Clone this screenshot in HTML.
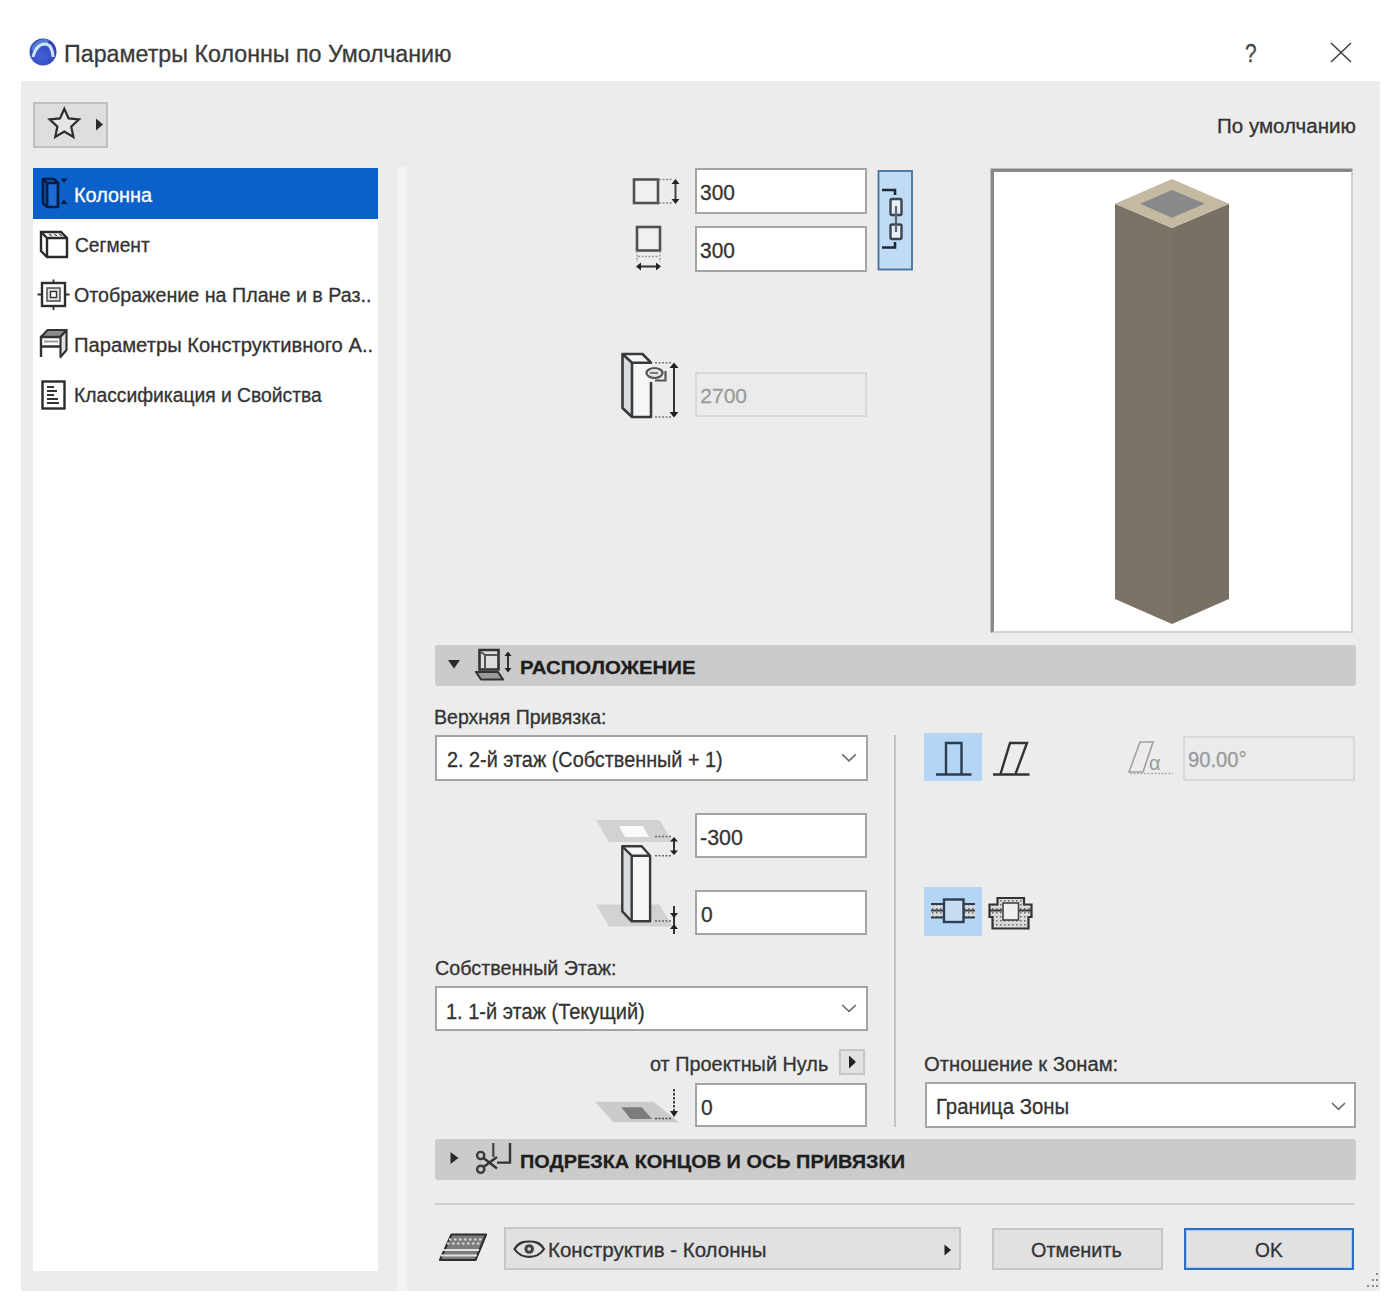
<!DOCTYPE html>
<html><head><meta charset="utf-8">
<style>
html,body{margin:0;padding:0;}
body{width:1396px;height:1308px;background:#fff;position:relative;overflow:hidden;font-family:"Liberation Sans",sans-serif;color:#333;}
.a{position:absolute;}
.t{position:absolute;white-space:nowrap;line-height:1;transform-origin:0 0;-webkit-text-stroke:0.3px currentColor;}
.body{left:21px;top:81px;width:1359px;height:1210px;background:#ececec;}
.inp{position:absolute;background:#fff;border:2px solid #a4a4a4;box-sizing:border-box;}
.dis{position:absolute;background:#ebebeb;border:2px solid #d8d8d8;box-sizing:border-box;}
.sect{position:absolute;left:435px;width:921px;height:41px;background:#cbcbcb;border-radius:3px;}
.btn{position:absolute;background:#e1e1e1;border:2px solid #c6c6c6;box-sizing:border-box;}
.tog{position:absolute;background:#b5d5f5;}
</style></head>
<body>
<!-- title -->
<svg class="a" style="left:27px;top:36px" width="32" height="32" viewBox="0 0 32 32">
  <defs><radialGradient id="lg" cx="0.45" cy="0.65" r="0.7"><stop offset="0" stop-color="#4560d8"/><stop offset="0.8" stop-color="#2f47b8"/><stop offset="1" stop-color="#1c2f88"/></radialGradient></defs>
  <circle cx="16" cy="16" r="13.5" fill="url(#lg)"/>
  <path d="M4.5 13 A13 13 0 0 1 22 4 L20 10 A9 9 0 0 0 8 18 Z" fill="#5a8ad8" opacity="0.8"/>
  <path d="M6 21 C8 13 12.5 8 18 8 C23 8 25.5 13 26 21" stroke="#cfe2fb" stroke-width="3" fill="none"/>
</svg>
<svg class="a" style="left:1330px;top:42px" width="22" height="21"><path d="M1 1 L21 20 M21 1 L1 20" stroke="#444" stroke-width="1.6"/></svg>

<div class="a body"></div>

<!-- star button -->
<div class="btn" style="left:33px;top:102px;width:75px;height:46px;background:#dedede;border-color:#bfbfbf"></div>
<svg class="a" style="left:0;top:0" width="120" height="160">
  <polygon points="64.3,108.8 68.6,118.4 79.0,119.4 71.2,126.6 73.4,137.0 64.3,131.6 55.2,137.0 57.4,126.6 49.6,119.4 60.0,118.4" fill="#e6e6e6" stroke="#2e2e2e" stroke-width="2.2" stroke-linejoin="miter"/>
  <polygon points="96,118.5 103,124.5 96,130.5" fill="#2a2a2a"/>
</svg>


<!-- left list -->
<div class="a" style="left:33px;top:168px;width:345px;height:1103px;background:#fff"></div>
<div class="a" style="left:33px;top:168px;width:345px;height:51px;background:#0b60c9"></div>
<svg class="a" style="left:0;top:160px" width="80" height="260" viewBox="0 160 80 260">
  <!-- kolonna icon on blue -->
  <path d="M49 184 L56 184 L56 206 L49 206 Z" fill="#1d6bd0"/>
  <g stroke="#0c1c40" fill="none" stroke-width="2.6" stroke-linejoin="round">
    <path d="M43 179 L54 179 L58 183 L58 207 L47 207 L43 203 Z"/>
    <path d="M43 179 L47 183 L58 183 M47 183 L47 207"/>
  </g>
  <path d="M60.5 178.5 L67.5 178.5 L64 183 Z M60.5 204 L67.5 204 L64 199.5 Z" fill="#0c1c40"/>
  <!-- segment cube -->
  <g stroke="#2a2a2a" fill="none" stroke-width="2.4">
    <path d="M41 232 L61 232 L67 238 L67 257 L47 257 L41 251 Z"/>
    <path d="M41 232 L47 238 L67 238 M47 238 L47 257"/>
  </g>
  <path d="M49 234 L52 236 M54 234 L57 236 M59 234 L62 236" stroke="#555" stroke-width="1.5"/>
  <!-- display plan icon -->
  <rect x="42" y="283" width="23" height="23" fill="#fff" stroke="#2e2e2e" stroke-width="2.4"/>
  <path d="M37.5 294.5 L42 294.5 M65 294.5 L69.5 294.5 M53.5 279.5 L53.5 283 M53.5 306 L53.5 310" stroke="#2e2e2e" stroke-width="1.8"/>
  <rect x="47" y="288" width="13" height="13" fill="#e0e0e0" stroke="#555" stroke-width="1.6"/>
  <rect x="50.5" y="291.5" width="6" height="6" fill="#fff" stroke="#333" stroke-width="1.4"/>
  <!-- struct analysis icon -->
  <path d="M41 337 L47.5 330 L66.5 330 L60.5 337 Z" fill="#8c8c8c" stroke="#333" stroke-width="2" stroke-linejoin="round"/>
  <path d="M60.5 337 L66.5 330 L66.5 350 L60.5 357 Z" fill="#dfe3e8" stroke="#333" stroke-width="2.2" stroke-linejoin="round"/>
  <g stroke="#333" fill="none" stroke-width="2.4">
    <path d="M41 357 L41 337 L60.5 337 M41 346.5 L60.5 346.5"/>
  </g>
  <path d="M44 341.5 L58 341.5" stroke="#999" stroke-width="2"/>
  <!-- classification doc -->
  <rect x="42.5" y="381.5" width="22" height="27" fill="#fff" stroke="#2a2a2a" stroke-width="2.4"/>
  <path d="M47 387 L54 387 M47 391 L57 391 M47 395 L54 395 M47 399 L58 399 M47 403 L59 403" stroke="#333" stroke-width="2"/>
</svg>

<!-- splitter -->
<div class="a" style="left:397px;top:167px;width:10px;height:1124px;background:#f3f3f3"></div>

<svg class="a" style="left:580px;top:160px" width="360" height="280" viewBox="580 160 360 280">
  <!-- width icon -->
  <rect x="634" y="179.5" width="24" height="23.5" fill="#f0f0f0" stroke="#505050" stroke-width="2.6"/>
  <path d="M659 179.5 L672 179.5 M659 203 L672 203" stroke="#888" stroke-width="1.4" stroke-dasharray="2 1.5"/>
  <path d="M675.5 183 L675.5 200" stroke="#444" stroke-width="2"/>
  <path d="M671.5 184 L675.5 179 L679.5 184 Z M671.5 199 L675.5 204 L679.5 199 Z" fill="#222"/>
  <!-- depth icon -->
  <rect x="637" y="227" width="23" height="23.5" fill="#f0f0f0" stroke="#505050" stroke-width="2.6"/>
  <path d="M637 251 L637 262 M660 251 L660 262 M638 256.5 L659 256.5" stroke="#999" stroke-width="1.4" stroke-dasharray="2 1.5"/>
  <path d="M640 266.5 L657 266.5" stroke="#333" stroke-width="2"/>
  <path d="M641 262.5 L636 266.5 L641 270.5 Z M656 262.5 L661 266.5 L656 270.5 Z" fill="#222"/>
  <!-- link button -->
  <rect x="878.5" y="171" width="33.5" height="98.5" fill="#c0dcf5" stroke="#44709f" stroke-width="1.8"/>
  <path d="M882 190 L895 190 L895 195" stroke="#1f2a38" stroke-width="2.6" fill="none"/>
  <path d="M882 247.5 L895 247.5 L895 242" stroke="#1f2a38" stroke-width="2.6" fill="none"/>
  <rect x="890.5" y="199" width="11" height="16" rx="1.5" fill="#e6eef6" stroke="#3a4552" stroke-width="2.4"/>
  <rect x="890.5" y="224.5" width="11" height="14.5" rx="1.5" fill="#e6eef6" stroke="#3a4552" stroke-width="2.4"/>
  <path d="M896 206 L896 232" stroke="#5a6672" stroke-width="2.2"/>
  <!-- height column icon -->
  <path d="M622.5 354 L642.5 354 L651 362.7 L651 417 L632 417 L622.5 408 Z" fill="#f6f6f6"/>
  <path d="M622.5 354 L632 362.7 L632 417 L622.5 408 Z" fill="#d9dde2"/>
  <g stroke="#3a3a3a" stroke-width="2.6" fill="none" stroke-linejoin="round">
    <path d="M651 382 L651 417 L632 417 L622.5 408 L622.5 354 L642.5 354 L651 362.7 L632 362.7 L622.5 354"/>
    <path d="M632 362.7 L632 417"/>
  </g>
  <path d="M655 362.7 L671 362.7 M655 417 L671 417" stroke="#777" stroke-width="1.4" stroke-dasharray="2 1.5"/>
  <path d="M674 367 L674 413" stroke="#333" stroke-width="2"/>
  <path d="M669.5 368 L674 362.5 L678.5 368 Z M669.5 412 L674 417.5 L678.5 412 Z" fill="#222"/>
  <ellipse cx="654.5" cy="373" rx="8" ry="5" fill="#e4e4e4" stroke="#555" stroke-width="2.2"/>
  <path d="M650 373 L658 373" stroke="#777" stroke-width="2"/>
  <path d="M655 380.5 L665.5 380.5 L665.5 371" stroke="#555" stroke-width="2.2" fill="none"/>
</svg>
<!-- size inputs -->
<div class="inp" style="left:695px;top:168px;width:172px;height:46px"></div>
<div class="inp" style="left:695px;top:226px;width:172px;height:46px"></div>

<div class="dis" style="left:695px;top:372px;width:172px;height:45px"></div>

<!-- preview -->
<div class="a" style="left:991px;top:169px;width:362px;height:464px;background:#fff;border-top:3px solid #888;border-left:3px solid #888;border-right:2px solid #d0d0d0;border-bottom:2px solid #d0d0d0;box-sizing:border-box;box-shadow:-1px -1px 0 #bdbdbd"></div>

<svg class="a" style="left:1100px;top:170px" width="150" height="460" viewBox="1100 170 150 460">
  <path d="M1115 203.8 L1172 228 L1172 624 L1115 599 Z" fill="#7b7266"/>
  <path d="M1229 203.8 L1172 228 L1172 624 L1229 599 Z" fill="#797064"/>
  <path d="M1172 179.1 L1229 203.8 L1172 228 L1115 203.8 Z" fill="#c5b9a1"/>
  <path d="M1172 189.9 L1204.8 203.8 L1172 217.8 L1140.3 203.8 Z" fill="#87898b"/>
</svg>
<!-- section 1 -->
<div class="sect" style="top:645px"></div>
<svg class="a" style="left:440px;top:640px" width="80" height="50" viewBox="440 640 80 50">
  <path d="M448 660 L460 660 L454 668.5 Z" fill="#2a2a2a"/>
  <path d="M479.5 650 L498.5 650 L498.5 669.5 L479.5 669.5 Z" fill="#dedede" stroke="#333" stroke-width="2.6"/>
  <path d="M481 652 L485 655 L485 669" stroke="#555" stroke-width="2" fill="none"/>
  <path d="M485 655 L498 655" stroke="#555" stroke-width="2"/>
  <path d="M476 672 L498 672 L503 679.5 L481 679.5 Z" fill="#9a9a9a" stroke="#333" stroke-width="2.2" stroke-linejoin="round"/>
  <path d="M508 655 L508 669" stroke="#333" stroke-width="2"/>
  <path d="M504.5 656 L508 651.5 L511.5 656 Z M504.5 668 L508 672.5 L511.5 668 Z" fill="#222"/>
</svg>

<div class="inp" style="left:435px;top:735px;width:433px;height:46px"></div>

<div class="inp" style="left:695px;top:813px;width:172px;height:45px"></div>
<div class="inp" style="left:695px;top:890px;width:172px;height:45px"></div>

<svg class="a" style="left:580px;top:800px" width="110" height="340" viewBox="580 800 110 340">
  <!-- top plane -->
  <path d="M596 820 L659.5 820 L672.5 842 L609 842 Z" fill="#d2d2d2"/>
  <path d="M619 826 L643 826 L649 837 L625 837 Z" fill="#fafafa"/>
  <!-- bottom plane -->
  <path d="M596 904.5 L659.5 904.5 L672.5 926.5 L609 926.5 Z" fill="#d2d2d2"/>
  <!-- column -->
  <path d="M622.3 846.3 L641.7 846.3 L650.1 855.7 L650.1 921.3 L631.7 921.3 L622.3 911.4 Z" fill="#f6f6f6"/>
  <path d="M622.3 846.3 L631.7 855.7 L631.7 921.3 L622.3 911.4 Z" fill="#d9dde2"/>
  <g stroke="#3a3a3a" stroke-width="2.4" fill="none" stroke-linejoin="round">
    <path d="M622.3 846.3 L641.7 846.3 L650.1 855.7 L650.1 921.3 L631.7 921.3 L622.3 911.4 Z"/>
    <path d="M622.3 846.3 L631.7 855.7 L650.1 855.7 M631.7 855.7 L631.7 921.3"/>
  </g>
  <path d="M655 836.5 L671 836.5 M655 855.7 L671 855.7 M655 921 L671 921" stroke="#666" stroke-width="1.4" stroke-dasharray="2 1.5"/>
  <path d="M674 840 L674 852" stroke="#333" stroke-width="2"/>
  <path d="M670 841.5 L674 837 L678 841.5 Z M670 850.5 L674 855 L678 850.5 Z" fill="#222"/>
  <path d="M674 906 L674 934" stroke="#333" stroke-width="2"/>
  <path d="M670 913 L674 918 L678 913 Z M670 929 L674 924 L678 929 Z" fill="#222"/>
  <!-- project zero plane -->
  <path d="M595 1101.8 L653.6 1101.8 L678.8 1122.3 L613.4 1122.3 Z" fill="#cbcbcb"/>
  <path d="M621.2 1107.3 L641.7 1107.3 L652 1119 L630.7 1119 Z" fill="#7c7c7c"/>
  <path d="M655 1118.5 L671 1118.5" stroke="#444" stroke-width="1.6" stroke-dasharray="2 1.5"/>
  <path d="M674 1089 L674 1112" stroke="#333" stroke-width="1.8" stroke-dasharray="2.5 1.5"/>
  <path d="M670 1111 L674 1117 L678 1111 Z" fill="#222"/>
</svg>
<div class="inp" style="left:435px;top:986px;width:433px;height:45px"></div>

<div class="btn" style="left:839px;top:1049px;width:26px;height:26px"></div>
<div class="inp" style="left:695px;top:1083px;width:172px;height:44px"></div>

<div class="a" style="left:894px;top:735px;width:2px;height:392px;background:#c4c4c4"></div>

<div class="tog" style="left:924px;top:733px;width:58px;height:48px"></div>
<div class="dis" style="left:1183px;top:736px;width:172px;height:45px"></div>
<div class="tog" style="left:924px;top:887px;width:58px;height:49px"></div>

<div class="inp" style="left:925px;top:1082px;width:431px;height:46px"></div>

<!-- section 2 -->
<div class="sect" style="top:1138.5px"></div>
<svg class="a" style="left:440px;top:1138px" width="80" height="45" viewBox="440 1138 80 45">
  <path d="M450.5 1152 L458.5 1158 L450.5 1164 Z" fill="#2a2a2a"/>
  <circle cx="480.7" cy="1155.5" r="3.6" fill="none" stroke="#3a3a3a" stroke-width="2.4"/>
  <circle cx="480.7" cy="1169.3" r="3.6" fill="none" stroke="#3a3a3a" stroke-width="2.4"/>
  <path d="M483.5 1158 L497 1168.5 M483.5 1167 L497 1157" stroke="#333" stroke-width="2.4"/>
  <path d="M493.3 1143 L493.3 1157" stroke="#444" stroke-width="2.2"/>
  <path d="M510 1143 L510 1162.6 L497 1162.6" stroke="#333" stroke-width="2.4" fill="none"/>
</svg>

<div class="a" style="left:435px;top:1203px;width:919px;height:2px;background:#cfcfcf"></div>

<!-- chevrons & misc icons -->
<svg class="a" style="left:0;top:0" width="1396" height="1308">
  <path d="M842.2 754.4 L849 760.8 L855.8 754.4" stroke="#6a6a6a" stroke-width="1.6" fill="none"/>
  <path d="M842.2 1005 L849 1011.4 L855.8 1005" stroke="#6a6a6a" stroke-width="1.6" fill="none"/>
  <path d="M1332 1103 L1338.5 1109.4 L1345 1103" stroke="#6a6a6a" stroke-width="1.6" fill="none"/>
  <!-- small arrow button -->
  <path d="M849 1055.5 L856 1062 L849 1068.5 Z" fill="#222"/>
</svg>
<!-- toggle icons -->
<svg class="a" style="left:900px;top:720px" width="300" height="230" viewBox="900 720 300 230">
  <defs>
    <pattern id="hatch" width="4" height="4" patternUnits="userSpaceOnUse"><rect width="4" height="4" fill="#dadada"/><rect width="1.5" height="1.5" fill="#6a6a6a"/></pattern>
  </defs>
  <!-- straight column -->
  <path d="M946 774 L946 743 L961.5 743 L961.5 774" stroke="#2c3b4e" stroke-width="2.4" fill="none"/>
  <path d="M936 774.5 L971.5 774.5" stroke="#2c3b4e" stroke-width="2.6"/>
  <!-- slanted column -->
  <path d="M1000.5 774 L1010 743 L1027 743 L1015.5 774" stroke="#333" stroke-width="2.4" fill="none" stroke-linejoin="miter"/>
  <path d="M993 774.5 L1029.5 774.5" stroke="#333" stroke-width="2.6"/>
  <!-- angle icon (disabled) -->
  <path d="M1129 772 L1140 742 L1153 742 L1143 772 Z" stroke="#a0a0a0" stroke-width="1.6" fill="none"/>
  <path d="M1130 773.5 L1173 773.5" stroke="#aaa" stroke-width="1.4" stroke-dasharray="2 1.5"/>
  <text x="1149" y="769.5" font-family="Liberation Sans" font-size="20" fill="#9a9a9a">α</text>
  <!-- wall relation icon 1 -->
  <rect x="931" y="903" width="44" height="15.5" fill="url(#hatch)"/>
  <path d="M931 904 L975 904 M931 910.5 L975 910.5 M931 917.5 L975 917.5" stroke="#2e3e52" stroke-width="2"/>
  <rect x="944" y="899.5" width="19.5" height="22.5" fill="#c7dcf2" stroke="#2e3e52" stroke-width="2.4"/>
  <!-- wall relation icon 2 -->
  <path d="M997.5 898 L1024 898 L1024 904.5 L1031.5 904.5 L1031.5 917 L1028.5 917 L1028.5 928.5 L992.5 928.5 L992.5 917 L989.5 917 L989.5 904.5 L997.5 904.5 Z" fill="url(#hatch)" stroke="#333" stroke-width="2.2"/>
  <path d="M989.5 910.5 L1002 910.5 M1019 910.5 L1031.5 910.5" stroke="#333" stroke-width="2"/>
  <rect x="1003" y="903" width="15.5" height="17" fill="#efefef" stroke="#444" stroke-width="1.6"/>
</svg>

<!-- footer -->
<div class="btn" style="left:504px;top:1227px;width:457px;height:43px"></div>
<svg class="a" style="left:940px;top:1240px" width="20" height="20"><path d="M4.5 4.5 L11 10 L4.5 15.5 Z" fill="#222"/></svg>
<div class="btn" style="left:992px;top:1228px;width:171px;height:42px"></div>
<div class="btn" style="left:1184px;top:1228px;width:170px;height:42px;border:2.5px solid #2f6fc0;box-shadow:inset 0 0 0 1px #a9cdf5"></div>

<svg class="a" style="left:1360px;top:1268px" width="20" height="22" viewBox="1360 1268 20 22">
  <g fill="#8a8a8a"><rect x="1376" y="1273" width="2" height="2"/><rect x="1372" y="1279" width="2" height="2"/><rect x="1376" y="1279" width="2" height="2"/><rect x="1367" y="1285" width="2" height="2"/><rect x="1372" y="1285" width="2" height="2"/><rect x="1376" y="1285" width="2" height="2"/></g>
</svg>
<!-- footer icons -->
<svg class="a" style="left:430px;top:1220px" width="130" height="60" viewBox="430 1220 130 60">
  <path d="M451.5 1234.5 L486 1234.5 L475.5 1260 L440 1260 Z" fill="#7c7c7c" stroke="#2e2e2e" stroke-width="2.2" stroke-linejoin="round"/>
  <path d="M442 1250 L479 1250 M441 1255.5 L477 1255.5" stroke="#e0e0e0" stroke-width="2.2"/>
  <path d="M449 1239.5 L482 1239.5 M447 1243.5 L480 1243.5" stroke="#dcdcdc" stroke-width="2" stroke-dasharray="2.5 2.5"/>
  <!-- eye -->
  <path d="M514.5 1249 C519 1242 524 1241.5 529.2 1241.5 C534.5 1241.5 539.5 1242 544 1249 C539.5 1256 534.5 1256.8 529.2 1256.8 C524 1256.8 519 1256 514.5 1249 Z" fill="none" stroke="#333" stroke-width="2.2"/>
  <circle cx="529.2" cy="1249" r="4.8" fill="#444"/><circle cx="529.2" cy="1249" r="1.8" fill="#ddd"/>
</svg>
<!-- texts -->
<div class="t" style="left:63.98px;top:43.30px;font-size:23px;color:#3a3a3a;transform:scaleX(1.011)">Параметры Колонны по Умолчанию</div>
<div class="t" style="left:1245.17px;top:40.70px;font-size:25px;color:#4a4a4a;transform:scaleX(0.833)">?</div>
<div class="t" style="left:1216.95px;top:117.00px;font-size:19.5px;color:#333;transform:scaleX(1.054)">По умолчанию</div>
<div class="t" style="left:73.96px;top:186.20px;font-size:19.5px;color:#fff;transform:scaleX(1.019)">Колонна</div>
<div class="t" style="left:74.62px;top:236.00px;font-size:19.5px;color:#333;transform:scaleX(0.983)">Сегмент</div>
<div class="t" style="left:74.49px;top:286.00px;font-size:19.5px;color:#333;transform:scaleX(1.010)">Отображение на Плане и в Раз..</div>
<div class="t" style="left:74.46px;top:336.00px;font-size:19.5px;color:#333;transform:scaleX(1.036)">Параметры Конструктивного А..</div>
<div class="t" style="left:73.52px;top:385.50px;font-size:19.5px;color:#333;transform:scaleX(0.988)">Классификация и Свойства</div>
<div class="t" style="left:700.05px;top:182.10px;font-size:22px;color:#333;transform:scaleX(0.951)">300</div>
<div class="t" style="left:700.05px;top:240.30px;font-size:22px;color:#333;transform:scaleX(0.951)">300</div>
<div class="t" style="left:700.30px;top:385.00px;font-size:21px;color:#9a9a9a">2700</div>
<div class="t" style="left:520.23px;top:657.50px;font-size:19px;color:#1e1e1e;font-weight:700;transform:scaleX(1.072)">РАСПОЛОЖЕНИЕ</div>
<div class="t" style="left:434.45px;top:706.80px;font-size:20px;color:#333;transform:scaleX(0.977)">Верхняя Привязка:</div>
<div class="t" style="left:446.98px;top:750.20px;font-size:21.5px;color:#333;transform:scaleX(0.923)">2. 2-й этаж (Собственный + 1)</div>
<div class="t" style="left:700.43px;top:826.50px;font-size:22px;color:#333;transform:scaleX(0.974)">-300</div>
<div class="t" style="left:700.55px;top:904.00px;font-size:22px;color:#333;transform:scaleX(0.955)">0</div>
<div class="t" style="left:435.01px;top:958.30px;font-size:20px;color:#333;transform:scaleX(0.986)">Собственный Этаж:</div>
<div class="t" style="left:445.64px;top:1001.60px;font-size:21.5px;color:#333;transform:scaleX(0.930)">1. 1-й этаж (Текущий)</div>
<div class="t" style="left:649.51px;top:1053.50px;font-size:20px;color:#333;transform:scaleX(0.993)">от Проектный Нуль</div>
<div class="t" style="left:700.55px;top:1096.60px;font-size:22px;color:#333;transform:scaleX(0.955)">0</div>
<div class="t" style="left:1188.08px;top:748.60px;font-size:22px;color:#9a9a9a;transform:scaleX(0.919)">90.00°</div>
<div class="t" style="left:923.79px;top:1054.30px;font-size:20px;color:#333;transform:scaleX(1.012)">Отношение к Зонам:</div>
<div class="t" style="left:936.01px;top:1096.70px;font-size:21.5px;color:#333;transform:scaleX(0.946)">Граница Зоны</div>
<div class="t" style="left:520.25px;top:1151.50px;font-size:19px;color:#1e1e1e;font-weight:700;transform:scaleX(1.047)">ПОДРЕЗКА КОНЦОВ И ОСЬ ПРИВЯЗКИ</div>
<div class="t" style="left:547.95px;top:1240.20px;font-size:20px;color:#333;transform:scaleX(1.024)">Конструктив - Колонны</div>
<div class="t" style="left:1031.18px;top:1241.20px;font-size:19.5px;color:#333;transform:scaleX(1.020)">Отменить</div>
<div class="t" style="left:1255.01px;top:1241.20px;font-size:19.5px;color:#333;transform:scaleX(0.985)">OK</div>
</body></html>
